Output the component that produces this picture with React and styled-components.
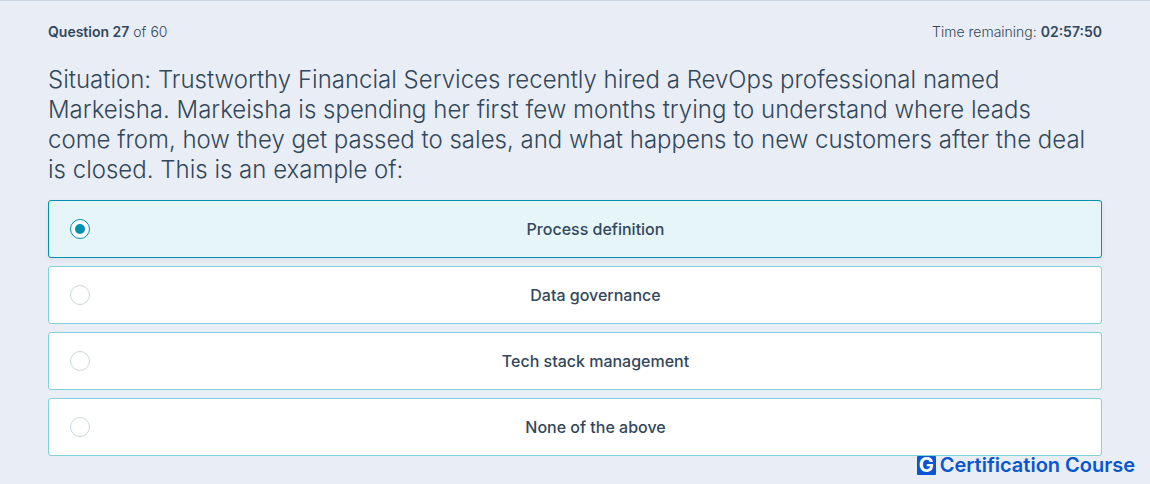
import React, { useState } from "react";
import styled, { createGlobalStyle } from "styled-components";

const options = [
    "Process definition",
    "Data governance",
    "Tech stack management",
    "None of the above"
];

function App() {
    const [answer, setAnswer] = useState(options[0]);

    return (
        <Page>
            <GlobalStyle />
            <Main>
                <Topbar>
                    <span>
                        <Strong>Question 27</Strong> of 60
                    </span>
                    <span>
                        Time remaining: <Strong>02:57:50</Strong>
                    </span>
                </Topbar>
                <Question id="question">
                    Situation: Trustworthy Financial Services recently hired a
                    RevOps professional named Markeisha. Markeisha is spending
                    her first few months trying to understand where leads come
                    from, how they get passed to sales, and what happens to new
                    customers after the deal is closed. This is an example of:
                </Question>
                <Options role="radiogroup" aria-labelledby="question">
                    {options.map(option => (
                        <Option key={option} $selected={option === answer}>
                            <Radio
                                type="radio"
                                name="answer"
                                value={option}
                                checked={option === answer}
                                onChange={e => setAnswer(e.target.value)}
                            />
                            <OptionText>{option}</OptionText>
                        </Option>
                    ))}
                </Options>
            </Main>
            <Brand>
                <BrandMark>G</BrandMark>
                <span>Certification Course</span>
            </Brand>
        </Page>
    );
}

export default App;

const GlobalStyle = createGlobalStyle`
    * {
        box-sizing: border-box;
    }

    body {
        margin: 0;
        background-color: #e9eef6;
        color: #33475b;
        font-family: Inter, "Open Sans", sans-serif;
    }
`;

const Page = styled.div`
    border-top: 1px solid #cbd6e2;
`;

const Main = styled.main`
    padding: 20px 48px 0;
`;

const Topbar = styled.header`
    display: flex;
    justify-content: space-between;
    font-size: 14px;
    font-weight: 300;
    line-height: 22px;
`;

const Strong = styled.strong`
    font-weight: 600;
`;

const Question = styled.h1`
    margin: 22px 0 15px;
    padding-right: 8px;
    font-size: 24px;
    font-weight: 300;
    line-height: 30px;
`;

const Options = styled.div`
    display: flex;
    flex-direction: column;
    gap: 8px;
`;

const Option = styled.label`
    display: flex;
    align-items: center;
    height: 58px;
    padding-left: 21px;
    border: 1px solid ${props => (props.$selected ? "#0091ae" : "#7fd1de")};
    border-radius: 3px;
    background-color: ${props => (props.$selected ? "#e5f5f8" : "#ffffff")};
    box-shadow: ${props =>
        props.$selected ? "0 2px 5px rgba(45, 62, 80, 0.08)" : "none"};
    cursor: pointer;
`;

const Radio = styled.input`
    appearance: none;
    flex: none;
    display: grid;
    place-items: center;
    width: 20px;
    height: 20px;
    margin: 0;
    border: 1px solid #cbd6e2;
    border-radius: 50%;
    background-color: #ffffff;

    &:checked {
        border-color: #0091ae;
    }

    &:checked::before {
        content: "";
        width: 10px;
        height: 10px;
        border-radius: 50%;
        background-color: #0091ae;
    }
`;

const OptionText = styled.span`
    flex: 1;
    font-size: 16px;
    font-weight: 500;
    line-height: 24px;
    text-align: center;
`;

const Brand = styled.footer`
    display: flex;
    align-items: center;
    justify-content: flex-end;
    gap: 4px;
    padding-right: 15px;
    color: #0a56d0;
    font-size: 20px;
    font-weight: 600;
    line-height: 19px;
`;

const BrandMark = styled.span`
    width: 19px;
    border-radius: 1px;
    background-color: #0a56d0;
    color: #ffffff;
    font-weight: 700;
    text-align: center;
`;
